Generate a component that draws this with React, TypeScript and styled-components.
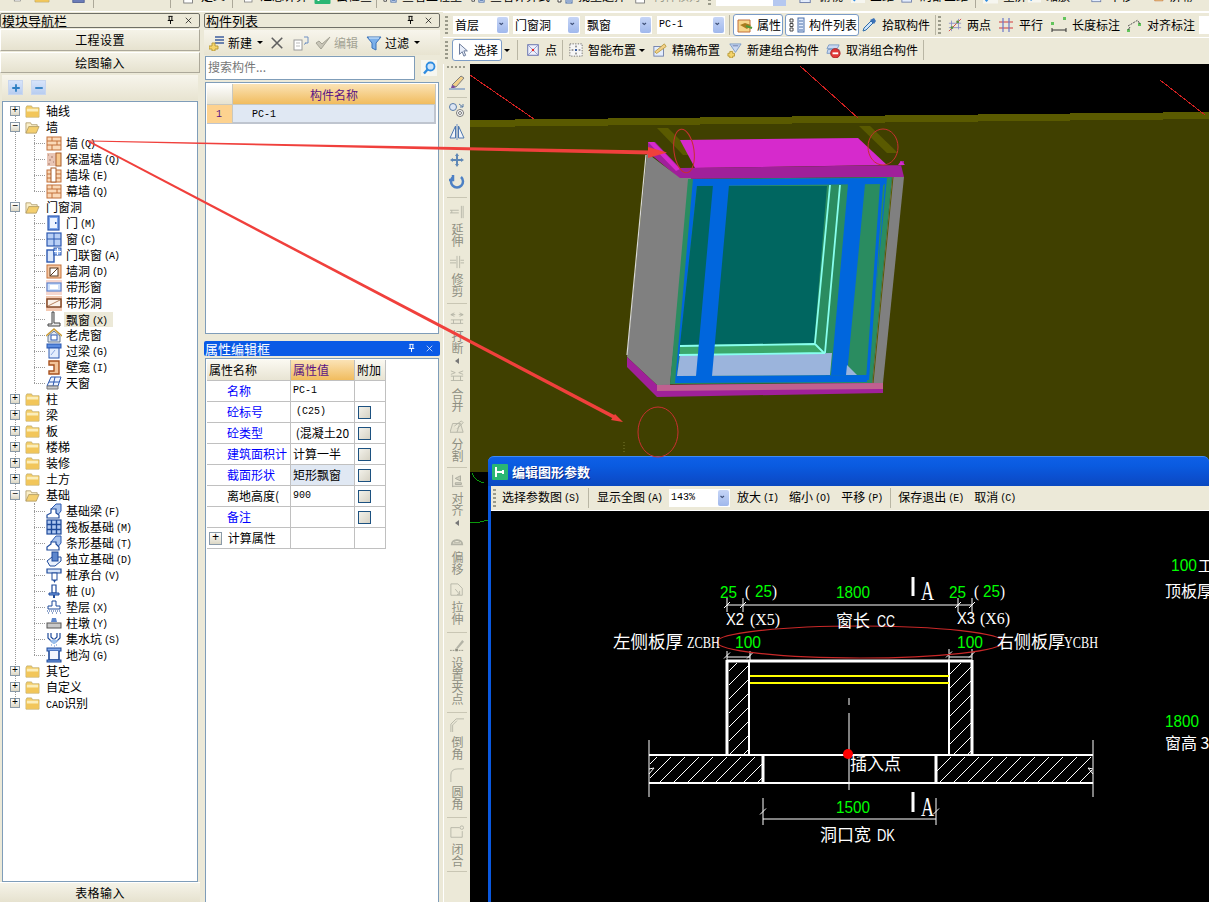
import React from "react";
import styled, { createGlobalStyle } from "styled-components";

const UI = `"Noto Sans CJK SC", "Liberation Sans", sans-serif`;
const XP = "#ECE9D8";
const SANS = `"Liberation Sans", sans-serif`;
const SERIF = `"Liberation Serif", serif`;
const MONO = `"Liberation Mono", monospace`;

const Global = createGlobalStyle`
  html, body { margin: 0; padding: 0; width: 1209px; height: 902px; overflow: hidden; background: ${XP}; }
  * { box-sizing: border-box; }
`;

const Page = styled.div`
  position: relative; width: 1209px; height: 902px; overflow: hidden;
  display: flex; flex-direction: column; background: ${XP};
  font: 12px/14px ${UI}; color: #000;
`;
const Lat = styled.span<{ $ml?: number }>`
  font-family: ${MONO}; font-size: 10px; margin-left: ${(p) => p.$ml ?? 0}px;
`;
const Hot = styled.span`
  font-family: ${MONO}; font-size: 10px; letter-spacing: -1px; margin-left: 2px; vertical-align: 1px;
`;

/* ---------- top clipped toolbar ---------- */
const TopStrip = styled.div`
  height: 12px; flex: none; overflow: hidden; border-bottom: 1px solid #fff; background: ${XP};
`;
const TopInner = styled.div`
  display: flex; height: 24px; margin-top: -16px; align-items: center; padding-left: 13px;
`;
const TopItem = styled.div<{ $w: number; $pl?: number; $dim?: boolean }>`
  width: ${(p) => p.$w}px; flex: none; display: flex; align-items: center; gap: 5px; white-space: nowrap;
  padding-left: ${(p) => p.$pl ?? 0}px;
  color: ${(p) => (p.$dim ? "#9a9a8a" : "#000")};
`;
const TopCombo = styled.div`
  width: 70px; height: 20px; background: #fff; border-right: 13px solid #B5C8F0; flex: none;
`;
const TopSep = styled.span`
  width: 1px; height: 24px; background: #aca899; flex: none;
`;

/* ---------- layout ---------- */
const Main = styled.div`
  flex: 1; min-height: 0; display: flex;
`;
const LeftCol = styled.div`
  width: 200px; flex: none; display: flex; flex-direction: column;
`;
const MidCol = styled.div`
  width: 236px; flex: none; margin-left: 4px; display: flex; flex-direction: column;
`;
const RightCol = styled.div`
  flex: 1; min-width: 0; margin-left: 3px; display: flex; flex-direction: column;
`;

const TitleBar = styled.div<{ $active?: boolean; $mt?: number }>`
  height: 15px; margin-top: ${(p) => p.$mt ?? 1}px; flex: none;
  display: flex; align-items: center; padding-right: 5px;
  font-size: 13px; line-height: 14px;
  background: ${(p) => (p.$active ? "#0A5AE6" : XP)};
  color: ${(p) => (p.$active ? "#fff" : "#000")};
  border: ${(p) => (p.$active ? "0" : "1px solid #6f6f66")};
  border-radius: 2px;
  & > span:first-child { flex: 1; padding-left: 1px; }
`;
const TitleGlyphs = styled.div`
  display: flex; gap: 7px; align-items: center;
`;

const NavButton = styled.div<{ $h: number; $mt: number }>`
  height: ${(p) => p.$h}px; margin-top: ${(p) => p.$mt}px; flex: none;
  display: flex; align-items: center; justify-content: center;
  font-size: 12px; letter-spacing: 0.4px;
  background: linear-gradient(#F5F3E8, #E6E2CF);
  border: 1px solid #fff; border-bottom-color: #ACA899; border-right-color: #ACA899;
`;
const NavTools = styled.div`
  height: 25px; margin: 2px 2px 0; flex: none; display: flex; align-items: center; gap: 8px; padding-left: 6px;
  background: linear-gradient(#F7F5EC, #E8E4D1);
`;
const SquareBtn = styled.span`
  width: 15px; height: 15px; display: flex; align-items: center; justify-content: center;
  background: linear-gradient(#D7E4FA, #B8CDF0); border: 1px solid #C8D6EE;
`;
const TreeFrame = styled.div`
  flex: 1; min-height: 0; margin: 1px 2px 0; background: #fff; border: 1px solid #7F9DB9; padding-top: 1px; overflow: hidden;
`;
const TreeList = styled.div`
  position: relative;
  &::before {
    content: ""; position: absolute; left: 12px; top: 8px; height: 592px; border-left: 1px dotted #9a9a9a;
  }
`;
const ChildGroup = styled.div`
  position: relative;
  &::before { content: ""; position: absolute; left: 31px; top: 0; bottom: 8px; border-left: 1px dotted #9a9a9a; }
`;
const TreeRow = styled.div<{ $child?: boolean }>`
  position: relative; height: 16px; display: flex; align-items: center;
  padding-left: ${(p) => (p.$child ? 31 : 7)}px; white-space: nowrap;
`;
const Expander = styled.span`
  width: 10px; height: 10px; flex: none; background: linear-gradient(#fff, #DCD7C4); border: 1px solid #8A9AA8;
  display: flex; align-items: center; justify-content: center; font: 10px/8px ${MONO}; color: #000;
`;
const Branch = styled.span`
  width: 11px; flex: none; border-top: 1px dotted #9a9a9a;
`;
const FolderWrap = styled.span`
  margin-left: 5px; margin-right: 6px; display: flex; flex: none;
`;
const IconWrap = styled.span`
  display: flex; flex: none; margin-left: 1px; margin-right: 2px;
`;
const TreeLabel = styled.span<{ $sel?: boolean }>`
  padding: 0 2px; height: 15px; line-height: 15px; display: inline-block; margin-bottom: ${(p) => (p.$sel ? 0 : 2)}px;
  background: ${(p) => (p.$sel ? XP : "transparent")}; width: ${(p) => (p.$sel ? "49px" : "auto")};
`;
const RootLabel = styled.span`
  height: 15px; line-height: 15px; display: inline-block; margin-bottom: 2px;
`;
const TableInput = styled.div`
  height: 20px; flex: none; display: flex; align-items: center; justify-content: center; letter-spacing: 0.4px;
  background: linear-gradient(#F5F3E8, #E6E2CF); border-top: 1px solid #fff;
`;

/* ---------- component list ---------- */
const ListTools = styled.div`
  height: 25px; margin-top: 2px; flex: none; display: flex; align-items: center; padding-left: 5px;
  background: linear-gradient(#F7F5EC, #E8E4D1);
`;
const LTool = styled.div<{ $ml?: number; $dim?: boolean }>`
  display: flex; align-items: center; gap: 3px; margin-left: ${(p) => p.$ml ?? 0}px; white-space: nowrap;
  color: ${(p) => (p.$dim ? "#a3a394" : "#000")};
`;
const SearchRow = styled.div`
  height: 26px; flex: none; display: flex; align-items: center; padding-left: 1px; gap: 6px;
`;
const SearchBox = styled.div`
  width: 210px; height: 24px; background: #fff; border: 1px solid #7F9DB9; padding: 0 0 3px 2px;
  display: flex; align-items: center; color: #777; font-size: 12px;
`;
const GridFrame = styled.div`
  height: 252px; margin: 1px 1px 0; flex: none; background: #fff; border: 1px solid #7F9DB9; padding: 1px;
  display: grid; grid-template-columns: 26px 203px; grid-template-rows: 21px 19px; align-content: start;
`;
const Corner = styled.div`
  background: linear-gradient(#fff, #E6E2D0); border-right: 1px solid #C8C8C0; border-bottom: 1px solid #C8C8C0;
`;
const HeadCell = styled.div`
  background: linear-gradient(#FBE3B6, #F1BC5E); color: #5A1484; display: flex; align-items: center; justify-content: center;
  border-bottom: 1px solid #C8C8C0; border-right: 1px solid #C8C8C0; padding-top: 1px;
`;
const IndexCell = styled.div`
  background: #FDD28F; color: #5A1484; display: flex; align-items: center; padding: 1px 0 0 9px;
  border-bottom: 1px solid #BFC5CF; border-right: 1px solid #C8C8C0;
  font: 10px ${MONO};
`;
const NameCell = styled.div`
  background: #E0E8F3; display: flex; align-items: center; padding: 2px 0 0 19px;
  border-bottom: 2px solid #BFC5CF; border-right: 2px solid #BFC5CF;
`;

/* ---------- property table ---------- */
const PropFrame = styled.div`
  flex: 1; min-height: 0; margin: 2px 1px 0; background: #fff; border: 1px solid #7F9DB9; border-bottom: 0; padding: 1px;
`;
const PropGrid = styled.div`
  display: grid; grid-template-columns: 84px 64px 31px; grid-auto-rows: 21px; width: 179px;
`;
const PCell = styled.div<{ $kind?: "head" | "headv" | "sel" }>`
  border-right: 1px solid #C0C0C0; border-bottom: 1px solid #C0C0C0; display: flex; align-items: center;
  overflow: hidden; white-space: nowrap; padding-left: 2px;
  background: ${(p) =>
    p.$kind === "head"
      ? "linear-gradient(#FBF9F1, #E8E4D3)"
      : p.$kind === "headv"
      ? "linear-gradient(#FBE3B6, #F1BC5E)"
      : p.$kind === "sel"
      ? "#E0E8F3"
      : "#fff"};
  color: ${(p) => (p.$kind === "headv" ? "#5A1484" : "#000")};
`;
const PName = styled(PCell)<{ $blue?: boolean }>`
  padding-left: 20px; color: ${(p) => (p.$blue ? "#0000FF" : "#000")};
`;
const Check = styled.span`
  width: 13px; height: 13px; margin-left: 1px; border: 1px solid #1C5180; background: linear-gradient(135deg, #F2F1EA, #D6D2C4);
`;
const PlusBox = styled(Expander)`
  width: 13px; height: 13px; margin: 0 3px 0 0; font-size: 12px; line-height: 11px;
`;

/* ---------- right toolbars ---------- */
const BarRow = styled.div<{ $h?: number; $pb?: number }>`
  height: ${(p) => p.$h ?? 25}px; flex: none; display: flex; align-items: center; padding: 0 0 ${(p) => p.$pb ?? 0}px 2px;
  border-top: 1px solid #fff; background: ${XP}; white-space: nowrap;
`;
const Grip = styled.span<{ $ml?: number }>`
  width: 3px; height: 18px; flex: none; margin-left: ${(p) => p.$ml ?? 0}px;
  background: repeating-linear-gradient(#9a9a8a 0 2px, transparent 2px 4px);
`;
const Combo = styled.div<{ $w: number; $ml: number }>`
  width: ${(p) => p.$w}px; height: 18px; margin-left: ${(p) => p.$ml}px; flex: none; background: #fff; position: relative;
  display: flex; align-items: center; padding-left: 2px;
`;
const ComboBtn = styled.span`
  position: absolute; right: 1px; top: 1px; bottom: 1px; width: 11px; background: linear-gradient(#C6D5F6, #A0B8EC);
  border-radius: 2px; display: flex; align-items: center; justify-content: center;
`;
const VSep = styled.span<{ $ml: number }>`
  width: 1px; height: 20px; margin-left: ${(p) => p.$ml}px; flex: none; background: #B9B6A4;
`;
const Toggle = styled.div<{ $w: number; $ml: number }>`
  width: ${(p) => p.$w}px; height: 22px; margin-left: ${(p) => p.$ml}px; flex: none; background: #fff;
  border: 1px solid #7C9CC6; border-radius: 3px; display: flex; align-items: center; gap: 4px; padding-left: 3px;
`;
const Tool = styled.div<{ $ml: number }>`
  margin-left: ${(p) => p.$ml}px; flex: none; display: flex; align-items: center; gap: 5px;
`;
const Caret = styled.span<{ $ml?: number }>`
  width: 0; height: 0; margin-left: ${(p) => p.$ml ?? 0}px; flex: none;
  border-left: 3px solid transparent; border-right: 3px solid transparent; border-top: 3px solid #000;
`;

const Content = styled.div`
  flex: 1; min-height: 0; display: flex;
`;
const VBar = styled.div`
  width: 27px; flex: none; background: ${XP}; display: flex; flex-direction: column; border-left: 1px solid #fff;
`;
const VGrip = styled.div`
  height: 8px; flex: none; margin: 2px 3px 0;
  background: repeating-linear-gradient(90deg, #9a9a8a 0 2px, transparent 2px 4px) 0 0 / 100% 2px no-repeat;
`;
const VItem = styled.div<{ $h: number; $pt: number }>`
  height: ${(p) => p.$h}px; padding-top: ${(p) => p.$pt}px; flex: none; display: flex; flex-direction: column; align-items: center; gap: 4px;
  color: #8f8f82;
`;
const VText = styled.span`
  writing-mode: vertical-rl; text-orientation: upright; font-size: 12px; line-height: 14px; letter-spacing: 0;
`;
const VDivider = styled.div<{ $mt: number }>`
  height: 1px; margin: ${(p) => p.$mt}px 3px 0; flex: none; background: #C9C6B4;
`;
const MiniArrow = styled.span`
  width: 0; height: 0; border-top: 3px solid transparent; border-bottom: 3px solid transparent; border-right: 4px solid #777;
`;

const Canvas = styled.div`
  flex: 1; min-width: 0; position: relative; background: #000; overflow: hidden;
`;
const Svg = styled.svg`
  display: block;
`;

/* ---------- floating window ---------- */
const EditWindow = styled.div`
  position: absolute; left: 18px; top: 392px; right: 0; bottom: 0; display: flex; flex-direction: column;
  background: #0A58DE; border-radius: 6px 6px 0 0; padding: 0 0 0 3px;
`;
const WinTitle = styled.div`
  height: 30px; flex: none; display: flex; align-items: center; gap: 4px;
  margin-left: -3px; padding-left: 4px;
  background: linear-gradient(#0E5FE6 0, #0A5BE0 30%, #0B4FCF 70%, #0A49C0 100%);
  border-radius: 6px 6px 0 0;
  color: #fff; font-weight: 700; font-size: 13px; text-shadow: 1px 1px 0 #0A2F8C; border-top: 1px solid #3D8BF5;
`;
const WinBar = styled.div`
  height: 25px; flex: none; display: flex; align-items: center; background: ${XP}; padding-left: 2px; white-space: nowrap; border-bottom: 1px solid #fff;
`;
const WinItem = styled.span<{ $ml: number }>`
  margin-left: ${(p) => p.$ml}px; flex: none;
`;
const WinDraw = styled.div`
  flex: 1; min-height: 0; background: #000; overflow: hidden;
`;
const DT = styled.text<{ $c?: string; $f?: string; $s?: number }>`
  fill: ${(p) => p.$c ?? "#fff"};
  font-family: ${(p) => p.$f ?? UI};
  font-size: ${(p) => p.$s ?? 16}px;
`;

const Overlay = styled.svg`
  position: absolute; left: 0; top: 0; pointer-events: none; z-index: 5;
`;

/* ---------- icons ---------- */
const icons: Record<string, React.ReactNode> = {
  pin: <path d="M5 2h6M6 2v6M10 2v6M4 8h8M8 8v5" stroke="currentColor" strokeWidth="1.4" fill="none" />,
  close: <path d="M4 4l8 8M12 4l-8 8" stroke="currentColor" strokeWidth="1" fill="none" />,
  plus: <path d="M8 3v10M3 8h10" stroke="#2D7FC2" strokeWidth="2.4" />,
  minus: <path d="M3 8h10" stroke="#2D7FC2" strokeWidth="2.4" />,
  folder: (
    <>
      <path d="M1 4l1-2h5l1 2h7v10H1z" fill="#F3CE69" stroke="#B9A25E" strokeWidth=".7" />
      <path d="M1.5 5h13v8.5h-13z" fill="#F2C65A" />
      <path d="M2 5h12v3H2z" fill="#FBEEBB" />
    </>
  ),
  folderOpen: (
    <>
      <path d="M1 14V3h5l1 2h6v2" fill="#FBEFC9" stroke="#A89460" strokeWidth=".8" />
      <path d="M1 14l3-7h11l-3 7z" fill="#F4CF6F" stroke="#A89460" strokeWidth=".8" />
    </>
  ),
  wall: (
    <>
      <rect x="1" y="2" width="14" height="13" fill="#FAD9B8" stroke="#C2703A" />
      <path d="M1 6h14M1 10h14M6 2v4M11 6v4M6 10v5" stroke="#C2703A" fill="none" />
    </>
  ),
  insul: (
    <>
      <rect x="1" y="2" width="9" height="13" fill="#E8C5B5" />
      <path d="M2 4h1M5 6h2M3 9h2M7 11h1M2 13h2" stroke="#A8796A" />
      <rect x="10" y="2" width="5" height="13" fill="#F6C68C" stroke="#A85D2A" />
    </>
  ),
  pier: (
    <>
      <rect x="1" y="3" width="14" height="12" fill="#FAD9B8" stroke="#C2703A" />
      <path d="M1 7h14M1 11h14" stroke="#C2703A" />
      <rect x="5" y="1" width="5" height="14" fill="#fff" stroke="#A85D2A" />
    </>
  ),
  door: (
    <>
      <rect x="2" y="1" width="11" height="14" fill="#7FA6EA" stroke="#2B58B0" strokeWidth="1.2" />
      <rect x="4" y="3" width="7" height="10" fill="#EEF4FF" />
      <rect x="9" y="7" width="1.5" height="2" fill="#2B58B0" />
    </>
  ),
  window: (
    <>
      <rect x="1" y="2" width="14" height="13" fill="#B8CFF5" stroke="#2B58B0" strokeWidth="1.2" />
      <path d="M8 2v13M1 8h14" stroke="#2B58B0" />
    </>
  ),
  doorwin: (
    <>
      <rect x="1" y="3" width="7" height="12" fill="#DCE8FB" stroke="#2B58B0" strokeWidth="1.4" />
      <rect x="8" y="1" width="7" height="7" fill="#9FBDF0" stroke="#2B58B0" />
      <path d="M11.5 1v7M8 4.5h7" stroke="#fff" />
    </>
  ),
  hole: (
    <>
      <rect x="1" y="2" width="14" height="13" fill="#F7C9A4" stroke="#C2703A" />
      <rect x="4" y="5" width="8" height="8" fill="#fff" stroke="#5A3A20" />
      <path d="M4 13l8-8" stroke="#5A3A20" />
    </>
  ),
  stripWin: (
    <>
      <rect x="0" y="1" width="16" height="15" fill="#F6D7CF" />
      <rect x="1" y="4" width="14" height="8" fill="#CFE0FA" stroke="#5F86D0" strokeWidth="1.2" />
      <rect x="4" y="6" width="8" height="4" fill="#fff" />
    </>
  ),
  stripHole: (
    <>
      <rect x="0" y="1" width="16" height="15" fill="#F3C9B2" />
      <rect x="1" y="4" width="14" height="8" fill="#FBF2EA" stroke="#7A3E1C" strokeWidth="1.4" />
      <path d="M2 11l12-6" stroke="#B9835E" />
    </>
  ),
  bay: <path d="M6 1h2v11h6v3H2v-2h4z" fill="#E8E8E8" stroke="#444" strokeWidth="1" />,
  dormer: (
    <>
      <path d="M0 9l8-7 8 7" fill="none" stroke="#C99A34" strokeWidth="1.6" />
      <path d="M2 9v6h12V9L8 4z" fill="#DFE7F3" stroke="#66788E" />
      <rect x="5" y="8" width="6" height="5" fill="#fff" stroke="#2B58B0" />
    </>
  ),
  lintel: (
    <>
      <rect x="1" y="1" width="14" height="4" fill="#5B8CE0" stroke="#2B58B0" />
      <rect x="3" y="5" width="10" height="10" fill="#E3EDFD" stroke="#2B58B0" />
      <path d="M5 12l4-5" stroke="#8AA8E0" />
    </>
  ),
  niche: <path d="M3 2h10v13H3v-3h5V6H3z" fill="#F2C49A" stroke="#A8511F" strokeWidth="1.4" />,
  sky: (
    <>
      <path d="M5 2h10l-3 9H1z" fill="#EEF4FF" stroke="#2B58B0" />
      <path d="M9 2l-2 9M3 7h10" stroke="#2B58B0" />
      <path d="M1 11h11v3H1z" fill="#C8C8C8" stroke="#777" />
    </>
  ),
  fbeam: (
    <>
      <path d="M5 6l5-5h5v7l-4 5" fill="#A9C4EE" stroke="#2B58B0" />
      <path d="M1 15v-3l4-2V6h5v4l3 2v3z" fill="#fff" stroke="#1E4A9A" strokeWidth="1.2" />
    </>
  ),
  raft: (
    <>
      <rect x="1" y="1" width="14" height="14" fill="#AFC8F0" stroke="#1E4A9A" strokeWidth="1.2" />
      <path d="M1 5.5h14M1 10.5h14M5.500 1v14M10.500 1v14" stroke="#1E4A9A" strokeWidth="1.4" />
    </>
  ),
  strip: (
    <>
      <path d="M5 7l5-6h5v7l-4 5" fill="#A9C4EE" stroke="#2B58B0" />
      <path d="M1 15v-3l4-3V7h5v2l3 3v3z" fill="#fff" stroke="#1E4A9A" strokeWidth="1.2" />
    </>
  ),
  pad: (
    <>
      <path d="M1 10l5-4h9v4l-6 5H4z" fill="#EAF1FC" stroke="#1E4A9A" />
      <rect x="6" y="1" width="6" height="9" fill="#5D86CC" stroke="#1E4A9A" />
    </>
  ),
  cap: (
    <>
      <path d="M1 2h14v4H1z" fill="#D5E3F8" stroke="#1E4A9A" strokeWidth="1.2" />
      <rect x="6" y="6" width="5" height="7" fill="#fff" stroke="#1E4A9A" />
      <path d="M7 13h3l-1.500 3z" fill="#1E4A9A" />
    </>
  ),
  pile: (
    <>
      <path d="M6 2h4v8H6z" fill="#fff" stroke="#1E4A9A" strokeWidth="1.2" />
      <path d="M3 10h10v2H3z" fill="#7FA6EA" stroke="#1E4A9A" />
      <path d="M7 12h2v3H7z" fill="#1E4A9A" />
    </>
  ),
  cushion: (
    <>
      <path d="M6 2h4v5h4v3H2V7h4z" fill="#fff" stroke="#1E4A9A" />
      <path d="M1 12h14M2 14h2M6 14h2M10 14h2M14 14h1" stroke="#1E4A9A" strokeDasharray="1 1" />
    </>
  ),
  pcap: (
    <>
      <path d="M6 3h4l1 4H5z" fill="#5D86CC" />
      <rect x="1" y="8" width="14" height="5" fill="#C8C8C8" stroke="#555" />
    </>
  ),
  sump: (
    <>
      <path d="M2 2v5l4 4h4l4-4V2M5 2v4l2 2h2l2-2V2" fill="none" stroke="#1E4A9A" strokeWidth="1.2" />
      <path d="M4 9l3 4h2l3-4z" fill="#9CC0EC" />
      <path d="M5 14h1M8 15h1M10 14h1" stroke="#5D86CC" />
    </>
  ),
  trench: (
    <>
      <rect x="1" y="1" width="14" height="3" fill="#7FA6EA" stroke="#1E4A9A" />
      <path d="M3 4v9h10V4" fill="#F2F6FD" stroke="#1E4A9A" strokeWidth="1.6" />
      <rect x="1" y="13" width="14" height="2" fill="#7FA6EA" stroke="#1E4A9A" />
    </>
  ),
  newItem: (
    <>
      <path d="M6 2h9M6 5h9M6 8h9" stroke="#3E5E9E" strokeWidth="1.3" />
      <path d="M3 8v3H0v3h3v2h3v-2h3v-3H6V8z" fill="#F5D46A" stroke="#B99B3A" />
    </>
  ),
  del: <path d="M2 2l12 12M14 2L2 14" stroke="#5F5F5F" strokeWidth="1.8" />,
  copyD: (
    <>
      <rect x="1" y="5" width="8" height="10" fill="#fff" stroke="#9A9A9A" />
      <path d="M3 8h4M3 11h4" stroke="#BBB" />
      <path d="M11 2h4v6h-3M13 8l-2 1.500" fill="none" stroke="#6E8FC2" />
    </>
  ),
  checkD: <path d="M1 8l5 6L15 2l-8 7-3-3z" fill="#C9C6B8" stroke="#A4A294" />,
  funnel: (
    <>
      <path d="M1 2h14l-5 6v7l-4-2V8z" fill="#7CB0EA" stroke="#3B72B8" />
      <path d="M3 3h10" stroke="#CBE2FA" strokeWidth="1.2" />
    </>
  ),
  search: (
    <>
      <rect width="16" height="16" fill="#F6F6F0" />
      <circle cx="9.500" cy="6.500" r="4" fill="#CDE4FB" stroke="#2F8CE0" strokeWidth="1.8" />
      <path d="M6.500 9.500l-3.500 4" stroke="#2F8CE0" strokeWidth="2.4" />
    </>
  ),
  chev: <path d="M2 4l3.500 3L9 4" fill="none" stroke="#3F5078" strokeWidth="2.2" />,
  prop: (
    <>
      <path d="M1 3h12v12H1z" fill="#F7D68A" stroke="#C2703A" />
      <path d="M3 8l5-2 6 2-4 4z" fill="#A87C1E" />
      <path d="M9 9l6 2" stroke="#4E9A3A" strokeWidth="2" />
    </>
  ),
  list: (
    <>
      <rect x="9" y="1" width="6" height="14" fill="#E3EDFD" stroke="#4A6FA8" />
      <path d="M10 4h4M10 7h4M10 10h4M10 13h4" stroke="#4A6FA8" />
      <path d="M1 2h3v3H1zM1 6.500h3v3H1zM1 11h3v3H1z" fill="#fff" stroke="#444" />
    </>
  ),
  picker: (
    <>
      <path d="M2 14l1-3 7-7 2 2-7 7z" fill="#CDE4FB" stroke="#2F6CA8" />
      <path d="M9 3l4 4 2-3-2-3z" fill="#3B72B8" />
    </>
  ),
  twoPt: (
    <>
      <path d="M1 15L15 1" stroke="#D23A3A" />
      <path d="M4 3v12M12 1v12M1 6h14M1 11h14" stroke="#8A8FC8" />
      <circle cx="4.500" cy="11" r="1.600" fill="#5E8E3E" />
      <circle cx="11" cy="4.500" r="1.600" fill="#5E8E3E" />
    </>
  ),
  parallel: (
    <>
      <path d="M1 5h14M1 11h14" stroke="#D23A3A" strokeWidth="1.2" />
      <path d="M5 1v14M11 1v14" stroke="#6B78C8" strokeWidth="1.2" />
    </>
  ),
  dimL: (
    <>
      <path d="M1 11v4M15 11v4M1 13h14" stroke="#333" />
      <rect x="0" y="5" width="3" height="3" fill="#62C45C" />
      <rect x="12" y="0" width="3" height="3" fill="#62C45C" />
    </>
  ),
  dimA: (
    <>
      <path d="M2 9l10-6" stroke="#555" strokeDasharray="2 1" />
      <rect x="1" y="12" width="3" height="3" fill="#62C45C" />
      <rect x="12" y="6" width="3" height="3" fill="#62C45C" />
      <path d="M2 13l2-3M14 7l-2-3" stroke="#555" />
    </>
  ),
  cursor: <path d="M4 1v12l3-3 2 5 2-1-2-5h4z" fill="#E8EEFA" stroke="#5A6B8E" />,
  point: (
    <>
      <rect x="2" y="2" width="12" height="12" fill="#EEF0FB" stroke="#5664A8" />
      <path d="M2 2l12 12M14 2L2 14" stroke="#8A94C8" />
      <circle cx="8" cy="8" r="1.400" fill="#E02828" />
    </>
  ),
  smart: (
    <>
      <rect x="1" y="1" width="14" height="14" fill="#F6F6F6" stroke="#666" strokeDasharray="1.500 1.500" />
      <path d="M8 3v10M3 8h10" stroke="#222" strokeDasharray="2 2" />
      <circle cx="8" cy="8" r="1.200" fill="#2B58B0" />
    </>
  ),
  exact: (
    <>
      <rect x="1" y="4" width="11" height="11" fill="#E3EDFD" stroke="#6B7CA8" />
      <path d="M2 10L13 1l2 3-11 8z" fill="#F2D08A" stroke="#B99B3A" />
    </>
  ),
  newCombo: (
    <>
      <path d="M3 1h12l-6 9z" fill="#C9D8F2" stroke="#7C9CC6" />
      <path d="M6 3h6" stroke="#6B7CA8" />
      <path d="M3 9v2H1v3h2v2h3v-2h2v-3H6V9z" fill="#F5D46A" stroke="#B99B3A" />
    </>
  ),
  cancelCombo: (
    <>
      <path d="M3 2h11l-2 4H1zM2 7h12l-2 4H1z" fill="#C9D8F2" stroke="#7C9CC6" />
      <circle cx="10" cy="11" r="5" fill="#E23A3A" stroke="#A82020" />
      <path d="M7 11h6" stroke="#fff" strokeWidth="2" />
    </>
  ),
  brush: (
    <>
      <path d="M3 11L12 2l3 2-8 9z" fill="#F2D08A" stroke="#7E7E7E" />
      <path d="M3 11l4 2-2 1H2z" fill="#7A4B9E" />
      <path d="M0 15h16" stroke="#6E8FC2" strokeWidth="1.2" />
    </>
  ),
  circles: (
    <>
      <circle cx="4" cy="5" r="3.500" fill="#DDE6F4" stroke="#5A7CA8" />
      <circle cx="11" cy="11" r="3.500" fill="#fff" stroke="#777" />
      <circle cx="11" cy="11" r="1.500" fill="none" stroke="#777" />
      <path d="M10 2l4 3M14 2v3h-3" fill="none" stroke="#5A7CA8" />
    </>
  ),
  mirror: (
    <>
      <path d="M8 0v16" stroke="#6E8FC2" />
      <path d="M6.500 2v12H1zM9.500 2v12H15z" fill="#F2F4F8" stroke="#4D77B0" />
    </>
  ),
  move: <path d="M8 1l2 3H6zM8 15l2-3H6zM1 8l3-2v4zM15 8l-3-2v4zM7 4h2v3h3v2H9v3H7V9H4V7h3z" fill="#5F87B5" />,
  rotate: <path d="M4 3A6 6 0 1 0 12 3M4 1v5H0" fill="none" stroke="#4D80C4" strokeWidth="2.500" />,
  extend: <path d="M13 1v14M15 1v14M0 6h10M0 9h10M2 6v3" stroke="#B3B3A6" strokeWidth="1" fill="none" />,
  trim: <path d="M8 1v14M11 1v14M0 6h7M0 9h7M12 6h4M12 9h4" stroke="#B3B3A6" fill="none" />,
  brk: <path d="M1 3h5M10 3h5M1 9h14M1 13h14M4 9v4M12 9v4M5 1L1 3l4 2M11 1l4 2-4 2" stroke="#B3B3A6" fill="none" />,
  merge: <path d="M1 7h14M1 12h14M4 7v5M12 7v5M1 1l5 2-5 2M15 1l-5 2 5 2" stroke="#B3B3A6" fill="none" />,
  split: <path d="M0 14h15L12 4H3zM8 14l3-10M5 7l8-6 2 2-7 7" stroke="#B3B3A6" fill="#E6E3D2" />,
  align: <path d="M3 1v14M3 14h12M6 5l6-3v6zM6 10h7v2H6z" stroke="#A8A89C" fill="#D2D0C0" />,
  offset: (
    <>
      <path d="M2 12a6 5 0 0 1 12 0z" fill="none" stroke="#B3B3A6" strokeWidth="2" transform="translate(0,1)" />
      <path d="M5 11a3 3 0 0 1 6 0z" fill="none" stroke="#B3B3A6" />
    </>
  ),
  stretch: <path d="M1 1h8l5 5v8H1zM6 7l5 6M11 9v4H8" stroke="#B3B3A6" fill="none" />,
  grips: (
    <>
      <path d="M0 13h5M10 13h6" stroke="#8A8A7E" strokeDasharray="2 1" />
      <rect x="6" y="11" width="3" height="3" fill="#8A8A7E" />
      <path d="M7 10l7-9 2 2-7 8z" fill="#B3B3A6" />
    </>
  ),
  chamfer: <path d="M1 16V7l6-6h9M3 16V8l5-5" stroke="#B3B3A6" fill="none" />,
  fillet: <path d="M1 16V8Q1 1 9 1h7" stroke="#B3B3A6" fill="none" />,
  closeShape: (
    <>
      <path d="M1 3h10M1 3v11h13V7" stroke="#B3B3A6" fill="none" />
      <circle cx="13.500" cy="3" r="2" fill="none" stroke="#B3B3A6" />
    </>
  ),
  appIcon: (
    <>
      <rect width="16" height="16" rx="1" fill="#2BB673" />
      <path d="M4 3v10M4 8h7M11 6v4" stroke="#fff" strokeWidth="2" />
    </>
  ),
  doc: <rect x="2" y="0" width="10" height="16" fill="#fff" stroke="#777" />,
  saveI: <rect x="1" y="0" width="14" height="16" fill="#6B7CB8" stroke="#4A5A90" />,
};

const Ico = ({ n, s = 16, w }: { n: string; s?: number; w?: number }) => (
  <Svg width={w ?? s} height={s} viewBox="0 0 16 16">
    {icons[n]}
  </Svg>
);

/* ---------- data ---------- */
type Node = { t: string; k?: string; ic?: string; sel?: boolean };
type Group = { t: string; open?: boolean; kids?: Node[] };

const tree: Group[] = [
  { t: "轴线" },
  {
    t: "墙",
    open: true,
    kids: [
      { t: "墙", k: "Q", ic: "wall" },
      { t: "保温墙", k: "Q", ic: "insul" },
      { t: "墙垛", k: "E", ic: "pier" },
      { t: "幕墙", k: "Q", ic: "wall" },
    ],
  },
  {
    t: "门窗洞",
    open: true,
    kids: [
      { t: "门", k: "M", ic: "door" },
      { t: "窗", k: "C", ic: "window" },
      { t: "门联窗", k: "A", ic: "doorwin" },
      { t: "墙洞", k: "D", ic: "hole" },
      { t: "带形窗", ic: "stripWin" },
      { t: "带形洞", ic: "stripHole" },
      { t: "飘窗", k: "X", ic: "bay", sel: true },
      { t: "老虎窗", ic: "dormer" },
      { t: "过梁", k: "G", ic: "lintel" },
      { t: "壁龛", k: "I", ic: "niche" },
      { t: "天窗", ic: "sky" },
    ],
  },
  { t: "柱" },
  { t: "梁" },
  { t: "板" },
  { t: "楼梯" },
  { t: "装修" },
  { t: "土方" },
  {
    t: "基础",
    open: true,
    kids: [
      { t: "基础梁", k: "F", ic: "fbeam" },
      { t: "筏板基础", k: "M", ic: "raft" },
      { t: "条形基础", k: "T", ic: "strip" },
      { t: "独立基础", k: "D", ic: "pad" },
      { t: "桩承台", k: "V", ic: "cap" },
      { t: "桩", k: "U", ic: "pile" },
      { t: "垫层", k: "X", ic: "cushion" },
      { t: "柱墩", k: "Y", ic: "pcap" },
      { t: "集水坑", k: "S", ic: "sump" },
      { t: "地沟", k: "G", ic: "trench" },
    ],
  },
  { t: "其它" },
  { t: "自定义" },
  { t: "CAD识别" },
];

const props = [
  { n: "名称", v: <Lat>PC-1</Lat>, blue: true, nock: true },
  { n: "砼标号", v: <Lat $ml={3}>(C25)</Lat>, blue: true },
  { n: "砼类型", v: <span>&nbsp;(混凝土20</span>, blue: true },
  { n: "建筑面积计", v: "计算一半", blue: true },
  { n: "截面形状", v: "矩形飘窗", blue: true, sel: true },
  { n: "离地高度(", v: <Lat>900</Lat> },
  { n: "备注", v: "", blue: true },
];

type VT = { ic?: string; label?: string; h?: number; pt?: number; s?: number; arrow?: boolean; div?: number };
const vtools: VT[] = [
  { ic: "brush", h: 23, pt: 0 },
  { div: 0 },
  { ic: "circles", h: 24, pt: 4 },
  { ic: "mirror", h: 28, pt: 2 },
  { ic: "move", h: 22, pt: 2 },
  { ic: "rotate", h: 24, pt: 2 },
  { div: 1 },
  { ic: "extend", label: "延伸", h: 55, pt: 7, s: 14 },
  { ic: "trim", label: "修剪", h: 50, pt: 2, s: 14 },
  { div: 0 },
  { ic: "brk", label: "打断", arrow: true, h: 64, pt: 8, s: 14 },
  { ic: "merge", label: "合并", h: 50, pt: 2, s: 14 },
  { ic: "split", label: "分割", h: 49, pt: 2, s: 14 },
  { div: 0 },
  { ic: "align", label: "对齐", arrow: true, h: 63, pt: 6, s: 14 },
  { ic: "offset", label: "偏移", h: 50, pt: 2, s: 14 },
  { ic: "stretch", label: "拉伸", h: 51, pt: 2, s: 14 },
  { div: 0 },
  { ic: "grips", label: "设置夹点", h: 79, pt: 6, s: 14 },
  { div: 0 },
  { ic: "chamfer", label: "倒角", h: 53, pt: 5, s: 14 },
  { ic: "fillet", label: "圆角", h: 51, pt: 2, s: 14 },
  { div: 0 },
  { ic: "closeShape", label: "闭合", h: 53, pt: 7, s: 14 },
  { div: 0 },
];

/* ---------- drawing parts ---------- */
const Scene = () => (
  <Svg width={739} height={838} viewBox="470 64 739 838" shapeRendering="crispEdges">
    <rect x="470" y="64" width="739" height="838" fill="#000" />
    <path d="M470 120L1209 112V120L470 128z" fill="#5A5A00" />
    <path d="M470 127L1209 119V480L470 472z" fill="#404000" />
    <path d="M470 75L534 119M800 66L858 118M1160 80L1205 115" stroke="#D02020" fill="none" />
    <path d="M472 473q3 8 12 10M470 522h10l8-2" stroke="#0A9A0A" fill="none" />
    <g shapeRendering="auto">
      <path d="M657 128h11l27 27h-12zM859 126h11l28 27h-11z" fill="#5A5A00" />
      <path d="M680 140L858 138L887 165L695 168z" fill="#D62ACC" />
      <path d="M648 142h7l25 26L904 165V161L900 161L904 177L680 179L648 152z" fill="#A0209A" />
      <path d="M648 142h6l26 27-4 2zM898 165l3-4 4 4z" fill="#D62ACC" />
      <path d="M647 153L680 178H691L670 385H657L627 357z" fill="#808080" />
      <path d="M646 155L627 355" stroke="#D8D8D8" strokeWidth="1.200" />
      <path d="M892 177H904L883 383H872z" fill="#808080" />
      <path d="M688 179L892 177L872 383L670 384z" fill="#2A8C60" />
      <path d="M693 179L887 178L867 382L675 383z" fill="#0066DD" />
      <path d="M697 186L885 184L869 375L677 376z" fill="#2A8C60" />
      <path d="M697 186H827L814 343L680 345z" fill="#006660" />
      <path d="M680 355L832 353L830 375L677 376z" fill="#9BB4DC" />
      <path d="M680 347L815 344L824 353L680 355z" fill="#3BA86C" />
      <path d="M830 185L815 343M840 185L825 353M680 346L815 344L824 353M679 355L825 353" fill="none" stroke="#88FFEE" strokeWidth="1.800" />
      <path d="M713 185H729L712 376H696zM848 184H865L847 375H831z" fill="#0066DD" />
      <path d="M885 183L883 186L869 380L866 380L880 184z" fill="#0066DD" />
      <path d="M847 365L857 375H846z" fill="#9BB4DC" />
      <path d="M627 357L657 385L883 383V393L657 397L627 367z" fill="#A0209A" />
      <path d="M657 385L883 383V389L657 391z" fill="#C06090" />
      <path d="M893 177L873 383" stroke="#5A5A00" />
      <g fill="none" stroke="#C83030">
        <ellipse cx="684" cy="151" rx="10" ry="22" transform="rotate(-8 684 151)" />
        <ellipse cx="883" cy="147" rx="15" ry="18" />
      </g>
      <path d="M624 442v10" stroke="#7A7A30" strokeDasharray="1 2" />
    </g>
  </Svg>
);

const ticks = (pts: [number, number, number][]) =>
  pts.map(([x, y1, y2], i) => <path key={i} d={`M${x} ${y1}V${y2}M${x - 3} ${(y1 + y2) / 2 + 3}l6 -6`} stroke="#fff" />);

const G = ({ x, y, w, t }: { x: number; y: number; w: number; t: string }) => (
  <DT x={x} y={y} $c="#00FF00" $f={SANS} $s={16} textLength={w} lengthAdjust="spacingAndGlyphs">{t}</DT>
);
const L = ({ x, y, w, t, f = SANS, s = 17 }: { x: number; y: number; w: number; t: string; f?: string; s?: number }) => (
  <DT x={x} y={y} $f={f} $s={s} textLength={w} lengthAdjust="spacingAndGlyphs">{t}</DT>
);

const Drawing = () => (
  <Svg width={718} height={391} viewBox="491 511 718 391">
    <defs>
      <pattern id="hatch" width="14" height="14" patternUnits="userSpaceOnUse">
        <path d="M0 14L14 0" stroke="#fff" strokeWidth="1" />
      </pattern>
    </defs>
    <rect x="729" y="663" width="20" height="91" fill="url(#hatch)" />
    <rect x="950" y="663" width="21" height="91" fill="url(#hatch)" />
    <rect x="650" y="757" width="112" height="25" fill="url(#hatch)" />
    <rect x="937" y="757" width="155" height="25" fill="url(#hatch)" />
    <g stroke="#fff" fill="none">
      <path d="M727 661H972M727 660V754M972 660V754" strokeWidth="3" />
      <path d="M749 661V754M949 661V754" strokeWidth="2" />
      <path d="M649 755H1093M649 783H1093" strokeWidth="2" />
      <path d="M763 755V783M936 755V783" strokeWidth="3" />
      <path d="M649 740V797M1093 740V797" />
      <path d="M649 769l5 -1 -5 6M1093 769l-5 -1 5 6" />
      <path d="M849 698V705M849 713V790" />
      <path d="M727 605H972" />
      {ticks([
        [727, 598, 612],
        [743, 598, 612],
        [958, 598, 612],
        [972, 598, 612],
      ])}
      <path d="M727 657H750M949 657H972" />
      {ticks([
        [727, 651, 660],
        [750, 651, 660],
        [949, 649, 660],
        [972, 649, 660],
      ])}
      <path d="M763 819H936" />
      {ticks([
        [763, 798, 825],
        [936, 798, 825],
      ])}
      <path d="M913 577V596M913 792V812" strokeWidth="3" />
    </g>
    <path d="M750 676H949M750 683H949" stroke="#FFFF00" strokeWidth="2" />
    <circle cx="848" cy="754" r="5" fill="#FF0000" />
    <ellipse cx="860" cy="642" rx="143" ry="16" fill="none" stroke="#C82828" strokeWidth="1.200" />

    <G x={720} y={598} w={17} t="25" />
    <L x={745} y={597} w={5} t="(" f={SERIF} s={16} />
    <G x={755} y={597} w={17} t="25" />
    <L x={772} y={597} w={5} t=")" f={SERIF} s={16} />
    <G x={836} y={598} w={34} t="1800" />
    <G x={949} y={598} w={17} t="25" />
    <L x={974} y={597} w={5} t="(" f={SERIF} s={16} />
    <G x={983} y={597} w={17} t="25" />
    <L x={1000} y={597} w={5} t=")" f={SERIF} s={16} />
    <L x={921} y={600} w={13} t="A" f={SERIF} s={27} />
    <L x={921} y={816} w={13} t="A" f={SERIF} s={27} />
    <L x={726} y={625} w={18} t="X2" />
    <L x={750} y={625} w={30} t="(X5)" f={SERIF} />
    <L x={957} y={624} w={18} t="X3" />
    <L x={980} y={624} w={30} t="(X6)" f={SERIF} />
    <DT x="836" y="627" $s={17}>窗长</DT>
    <L x={877} y={627} w={18} t="CC" />
    <DT x="613" y="648" $s={17.500}>左侧板厚</DT>
    <L x={687} y={648} w={33} t="ZCBH" f={SERIF} />
    <G x={735} y={648} w={26} t="100" />
    <G x={957} y={648} w={26} t="100" />
    <DT x="997" y="648" $s={17}>右侧板厚</DT>
    <L x={1064} y={648} w={34} t="YCBH" f={SERIF} />
    <DT x="850" y="770" $s={17}>插入点</DT>
    <G x={836} y={813} w={34} t="1500" />
    <DT x="820" y="841" $s={17}>洞口宽</DT>
    <L x={877} y={841} w={18} t="DK" />
    <G x={1171} y={571} w={26} t="100" />
    <DT x="1198" y="571" $s={15}>工</DT>
    <DT x="1165" y="597" $s={16}>顶板厚</DT>
    <G x={1165} y={727} w={34} t="1800" />
    <DT x="1165" y="749" $s={16}>窗高 3</DT>
  </Svg>
);

const Annotations = () => (
  <Overlay width={1209} height={902} viewBox="0 0 1209 902">
    <path d="M90 140.500L650 150.500V154.500L90 141.500z" fill="#F0403C" />
    <path d="M648 147L667 152.500L648 158z" fill="#F0403C" />
    <path d="M88 140L616 416L614 419L88 142z" fill="#F0403C" />
    <path d="M615 414L623 422L611 420z" fill="#F0403C" />
    <ellipse cx="658" cy="432" rx="20" ry="25" fill="none" stroke="#C83030" />
  </Overlay>
);

/* ---------- app ---------- */
export default function App() {
  return (
    <Page>
      <Global />
      <TopStrip>
        <TopInner>
          <TopItem $w={20}><Ico n="doc" s={16} w={10} /></TopItem>
          <TopItem $w={39}><Ico n="folder" s={16} w={18} /></TopItem>
          <TopItem $w={21}><Ico n="saveI" s={16} w={13} /></TopItem>
          <TopSep />
          <TopItem $w={76} />
          <TopSep />
          <TopItem $w={61} $pl={11}><Ico n="doc" s={16} w={14} />定义</TopItem>
          <TopSep />
          <TopItem $w={81} $pl={10}><Ico n="doc" s={16} w={12} />汇总计算</TopItem>
          <TopItem $w={62}><Ico n="appIcon" s={16} w={17} />云检查</TopItem>
          <TopSep />
          <TopItem $w={94} $pl={6}><Ico n="list" s={16} w={14} />查看工程量</TopItem>
          <TopItem $w={86}><Ico n="list" s={16} w={14} />查看计算式</TopItem>
          <TopItem $w={77}><Ico n="list" s={16} w={16} />批量选择</TopItem>
          <TopItem $w={74} $dim><Ico n="doc" s={16} w={14} />构件核对</TopItem>
          <TopItem $w={8}><Grip /></TopItem>
          <TopCombo />
          <TopItem $w={65} $pl={13}><Ico n="exact" s={16} w={15} />俯视</TopItem>
          <TopItem $w={50}><Ico n="search" s={16} w={14} />三维</TopItem>
          <TopItem $w={74}><Ico n="exact" s={16} w={14} />局部三维</TopItem>
          <TopSep />
          <TopItem $w={52} $pl={7}><Ico n="search" s={16} w={15} />全屏</TopItem>
          <TopItem $w={63}><Ico n="search" s={16} w={13} />缩放</TopItem>
          <TopItem $w={63}><Ico n="exact" s={16} w={13} />平移</TopItem>
          <TopItem $w={40}><Ico n="prop" s={16} w={15} />屏幕</TopItem>
        </TopInner>
      </TopStrip>
      <Main>
        <LeftCol>
          <TitleBar>
            <span>模块导航栏</span>
            <TitleGlyphs>
              <Ico n="pin" s={11} />
              <Ico n="close" s={11} />
            </TitleGlyphs>
          </TitleBar>
          <NavButton $h={22} $mt={1}>工程设置</NavButton>
          <NavButton $h={21} $mt={1}>绘图输入</NavButton>
          <NavTools>
            <SquareBtn><Ico n="plus" s={12} /></SquareBtn>
            <SquareBtn><Ico n="minus" s={12} /></SquareBtn>
          </NavTools>
          <TreeFrame>
            <TreeList>
              {tree.map((g) => (
                <React.Fragment key={g.t}>
                  <TreeRow>
                    <Expander>{g.open ? "−" : "+"}</Expander>
                    <FolderWrap><Ico n={g.open ? "folderOpen" : "folder"} s={15} /></FolderWrap>
                    <RootLabel>
                      {g.t === "CAD识别" ? (<><Lat>CAD</Lat>识别</>) : g.t}
                    </RootLabel>
                  </TreeRow>
                  {g.kids && (
                    <ChildGroup>
                      {g.kids.map((k) => (
                        <TreeRow $child key={g.t + k.t}>
                          <Branch />
                          <IconWrap><Ico n={k.ic!} /></IconWrap>
                          <TreeLabel $sel={k.sel}>
                            {k.t}
                            {k.k && <Hot>({k.k})</Hot>}
                          </TreeLabel>
                        </TreeRow>
                      ))}
                    </ChildGroup>
                  )}
                </React.Fragment>
              ))}
            </TreeList>
          </TreeFrame>
          <TableInput>表格输入</TableInput>
        </LeftCol>

        <MidCol>
          <TitleBar>
            <span>构件列表</span>
            <TitleGlyphs>
              <Ico n="pin" s={11} />
              <Ico n="close" s={11} />
            </TitleGlyphs>
          </TitleBar>
          <ListTools>
            <LTool><Ico n="newItem" />新建<Caret $ml={2} /></LTool>
            <LTool $ml={7}><Ico n="del" s={14} /></LTool>
            <LTool $ml={9}><Ico n="copyD" /></LTool>
            <LTool $ml={6} $dim><Ico n="checkD" />编辑</LTool>
            <LTool $ml={8}><Ico n="funnel" />过滤<Caret $ml={2} /></LTool>
          </ListTools>
          <SearchRow>
            <SearchBox>搜索构件...</SearchBox>
            <Ico n="search" />
          </SearchRow>
          <GridFrame>
            <Corner />
            <HeadCell>构件名称</HeadCell>
            <IndexCell>1</IndexCell>
            <NameCell><Lat>PC-1</Lat></NameCell>
          </GridFrame>
          <TitleBar $active $mt={7}>
            <span>属性编辑框</span>
            <TitleGlyphs>
              <Ico n="pin" s={11} />
              <Ico n="close" s={11} />
            </TitleGlyphs>
          </TitleBar>
          <PropFrame>
            <PropGrid>
              <PCell $kind="head">属性名称</PCell>
              <PCell $kind="headv">属性值</PCell>
              <PCell $kind="head">附加</PCell>
              {props.map((r) => (
                <React.Fragment key={r.n}>
                  <PName $blue={r.blue}>{r.n}</PName>
                  <PCell $kind={r.sel ? "sel" : undefined}>{r.v}</PCell>
                  <PCell>{!r.nock && <Check />}</PCell>
                </React.Fragment>
              ))}
              <PCell><PlusBox>+</PlusBox>&nbsp;计算属性</PCell>
              <PCell />
              <PCell />
            </PropGrid>
          </PropFrame>
        </MidCol>

        <RightCol>
          <BarRow>
            <Grip />
            <Combo $w={56} $ml={5}>
              首层<ComboBtn><Ico n="chev" s={8} w={11} /></ComboBtn>
            </Combo>
            <Combo $w={67} $ml={4}>
              门窗洞<ComboBtn><Ico n="chev" s={8} w={11} /></ComboBtn>
            </Combo>
            <Combo $w={67} $ml={5}>
              飘窗<ComboBtn><Ico n="chev" s={8} w={11} /></ComboBtn>
            </Combo>
            <Combo $w={68} $ml={5}>
              <Lat>PC-1</Lat><ComboBtn><Ico n="chev" s={8} w={11} /></ComboBtn>
            </Combo>
            <VSep $ml={4} />
            <Toggle $w={50} $ml={3}><Ico n="prop" />属性</Toggle>
            <Toggle $w={74} $ml={2}><Ico n="list" />构件列表</Toggle>
            <Tool $ml={2}><Ico n="picker" />拾取构件</Tool>
            <VSep $ml={5} />
            <Grip $ml={2} />
            <Tool $ml={7}><Ico n="twoPt" s={14} />两点</Tool>
            <Tool $ml={7}><Ico n="parallel" />平行</Tool>
            <Tool $ml={8}><Ico n="dimL" />长度标注</Tool>
            <Tool $ml={6}><Ico n="dimA" />对齐标注</Tool>
            <Combo $w={12} $ml={4} />
          </BarRow>
          <BarRow $h={27} $pb={2}>
            <Grip />
            <Toggle $w={50} $ml={4}><Ico n="cursor" s={14} />选择</Toggle>
            <Caret $ml={2} />
            <VSep $ml={7} />
            <Tool $ml={8}><Ico n="point" s={14} />点</Tool>
            <VSep $ml={5} />
            <Tool $ml={6}><Ico n="smart" s={14} />智能布置<Caret $ml={-2} /></Tool>
            <Tool $ml={8}><Ico n="exact" s={14} />精确布置</Tool>
            <Tool $ml={7}><Ico n="newCombo" s={15} />新建组合构件</Tool>
            <Tool $ml={7}><Ico n="cancelCombo" s={15} />取消组合构件</Tool>
            <VSep $ml={5} />
          </BarRow>
          <Content>
            <VBar>
              <VGrip />
              {vtools.map((t, i) =>
                t.div !== undefined ? (
                  <VDivider key={i} $mt={t.div} />
                ) : (
                  <VItem key={i} $h={t.h!} $pt={t.pt!}>
                    <Ico n={t.ic!} s={t.s ?? 16} />
                    {t.label && <VText>{t.label}</VText>}
                    {t.arrow && <MiniArrow />}
                  </VItem>
                )
              )}
            </VBar>
            <Canvas>
              <Scene />
              <EditWindow>
                <WinTitle>
                  <Ico n="appIcon" />
                  编辑图形参数
                </WinTitle>
                <WinBar>
                  <Grip />
                  <WinItem $ml={6}>选择参数图<Hot>(S)</Hot></WinItem>
                  <VSep $ml={9} />
                  <WinItem $ml={8}>显示全图<Hot>(A)</Hot></WinItem>
                  <Combo $w={61} $ml={7}>
                    <Lat>143%</Lat>
                    <ComboBtn><Ico n="chev" s={8} w={11} /></ComboBtn>
                  </Combo>
                  <WinItem $ml={7}>放大<Hot>(I)</Hot></WinItem>
                  <WinItem $ml={11}>缩小<Hot>(O)</Hot></WinItem>
                  <WinItem $ml={11}>平移<Hot>(P)</Hot></WinItem>
                  <VSep $ml={8} />
                  <WinItem $ml={7}>保存退出<Hot>(E)</Hot></WinItem>
                  <WinItem $ml={11}>取消<Hot>(C)</Hot></WinItem>
                </WinBar>
                <WinDraw><Drawing /></WinDraw>
              </EditWindow>
            </Canvas>
          </Content>
        </RightCol>
      </Main>
      <Annotations />
    </Page>
  );
}
